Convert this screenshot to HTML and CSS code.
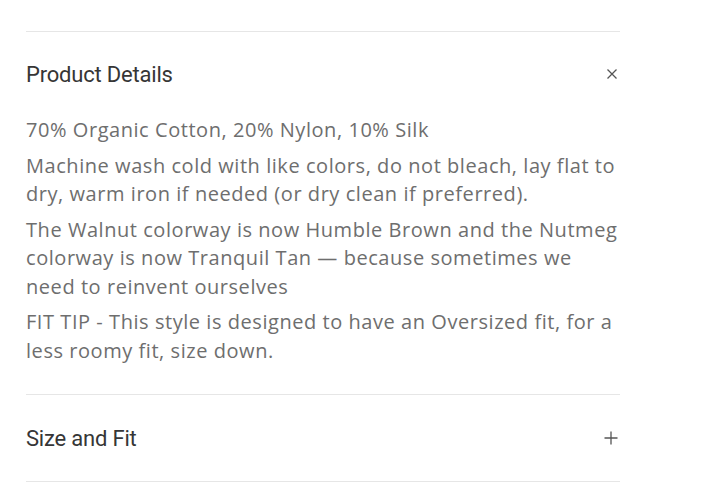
FILE: index.html
```html
<!DOCTYPE html>
<html>
<head>
<meta charset="utf-8">
<link rel="stylesheet" href="styles.css">
</head>
<body>
<div class="accordion">
  <section class="item open">
    <div class="head">
      <span class="title">Product Details</span>
      <svg class="icon" width="12" height="12" viewBox="0 0 12 12"><path d="M1.5 1.5L10.5 10.5M10.5 1.5L1.5 10.5" stroke="#555" stroke-width="1.3" fill="none"/></svg>
    </div>
    <div class="body">
      <p>70% Organic Cotton, 20% Nylon, 10% Silk</p>
      <p>Machine wash cold with like colors, do not bleach, lay flat to dry, warm iron if needed (or dry clean if preferred).</p>
      <p>The Walnut colorway is now Humble Brown and the Nutmeg colorway is now Tranquil Tan — because sometimes we need to reinvent ourselves</p>
      <p>FIT TIP - This style is designed to have an Oversized fit, for a less roomy fit, size down.</p>
    </div>
  </section>
  <section class="item">
    <div class="head head-closed">
      <span class="title">Size and Fit</span>
      <svg class="icon" width="14" height="14" viewBox="0 0 14 14"><path d="M7 0.5V13.5M0.5 7H13.5" stroke="#555" stroke-width="1.3" fill="none"/></svg>
    </div>
  </section>
</div>
</body>
</html>
```
FILE: styles.css
```css
html, body { margin: 0; padding: 0; background: #fff; }
.accordion {
  margin: 31px 0 0 26px;
  width: 594px;
  border-top: 1px solid #e6e6e6;
}
.item { border-bottom: 1px solid #e6e6e6; }
.head {
  height: 84px;
  display: flex;
  align-items: center;
  justify-content: space-between;
}
.head-closed { height: 86px; }
.title {
  font-family: Roboto, "Liberation Sans", sans-serif;
  font-size: 22px;
  color: #363636;
  letter-spacing: -0.2px;
}
.icon { margin-right: 2px; }
.body {
  padding: 0 0 29px 0;
  font-family: "Open Sans", Lato, sans-serif;
  font-size: 20px;
  letter-spacing: 0.55px;
  line-height: 28.5px;
  color: #6e6e6e;
}
.body p { margin: 0 0 7px 0; }
.body p:last-child { margin-bottom: 0; }
```
